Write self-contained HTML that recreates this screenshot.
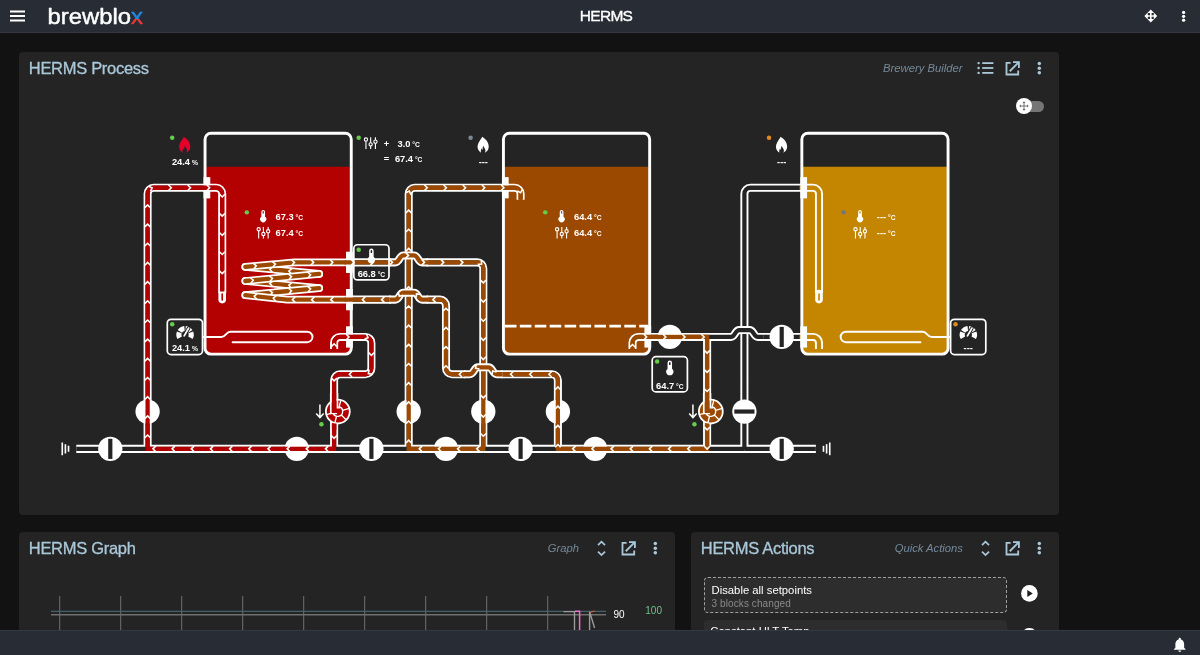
<!DOCTYPE html>
<html lang="en">
<head>
<meta charset="utf-8">
<title>HERMS</title>
<style>
html,body{margin:0;padding:0;}
body{width:1200px;height:655px;overflow:hidden;background:#121212;font-family:"Liberation Sans",sans-serif;color:#fff;position:relative;}
.hdr{will-change:transform;position:absolute;left:0;top:0;width:1200px;height:32px;background:#282c34;border-bottom:1px solid #35383f;}
.ftr{position:absolute;left:0;top:630px;width:1200px;height:24px;background:#282c34;border-top:1px solid #35383f;}
.abs{position:absolute;}
.title{-webkit-text-stroke:0.35px #fff;position:absolute;left:506px;width:200px;text-align:center;top:7.1px;font-size:15.5px;line-height:18px;letter-spacing:-0.7px;color:#fff;}
.w{will-change:transform;position:absolute;background:#242424;border-radius:4px;overflow:hidden;}
.wt{position:absolute;left:9.8px;top:5.8px;font-size:16.5px;line-height:20px;color:#a9c8d9;-webkit-text-stroke:0.3px #a9c8d9;white-space:nowrap;letter-spacing:-0.3px;}
.ws{position:absolute;top:9px;font-size:11.25px;line-height:14px;font-style:italic;color:#74899a;white-space:nowrap;text-align:right;}
svg{display:block;}
.builder{position:absolute;left:0;top:0;}
.bt{font-family:"Liberation Sans",sans-serif;font-size:12.5px;font-weight:bold;fill:#fff;stroke:none;}
.un{font-size:9px;}
.ico{position:absolute;}
</style>
</head>
<body>
<div class="hdr">
  <svg class="abs" style="left:0;top:0" width="160" height="32" viewBox="0 0 160 32">
    <path d="M10,11.5H25M10,16H25M10,20.5H25" stroke="#fff" stroke-width="1.9" fill="none"/>
    <defs><linearGradient id="xg" x1="0" y1="0" x2="0" y2="1" gradientUnits="objectBoundingBox"><stop offset="0.58" stop-color="#1e88e5"/><stop offset="0.58" stop-color="#e53935"/></linearGradient></defs>
    <text x="47.5" y="24.3" font-family="Liberation Sans, sans-serif" font-size="22.5" fill="#fff" stroke="#fff" stroke-width="0.45" stroke-linejoin="round" textLength="95.5" lengthAdjust="spacingAndGlyphs">brewblo<tspan fill="url(#xg)" stroke="url(#xg)">x</tspan></text>
  </svg>
  <div class="title">HERMS</div>
  <svg class="abs" style="left:1140px;top:4px" width="60" height="24" viewBox="0 0 60 24">
    <path d="M10.8,5.6L14.2,9H7.4ZM10.8,18.4L14.2,15H7.4ZM4.4,12L7.8,8.6V15.4ZM17.2,12L13.8,8.6V15.4Z" fill="#fff"/>
    <path d="M10.8,7.5V16.5M6.3,12H15.3" stroke="#fff" stroke-width="1.6"/>
    <circle cx="43.6" cy="8.4" r="1.65" fill="#fff"/><circle cx="43.6" cy="12.3" r="1.65" fill="#fff"/><circle cx="43.6" cy="16.2" r="1.65" fill="#fff"/>
  </svg>
</div>

<!-- widget 1 -->
<div class="w" style="left:19px;top:52px;width:1040px;height:463px;">
  <div class="wt">HERMS Process</div>
  <div class="ws" style="right:96.5px;">Brewery Builder</div>
  <svg class="abs" style="left:950px;top:4px" width="90" height="24" viewBox="0 0 90 24" fill="#a9c8d9">
    <!-- list -->
    <rect x="13.2" y="6.2" width="11.2" height="1.8"/><rect x="13.2" y="11.1" width="11.2" height="1.8"/><rect x="13.2" y="16" width="11.2" height="1.8"/>
    <circle cx="9.6" cy="7.1" r="1.2"/><circle cx="9.6" cy="12" r="1.2"/><circle cx="9.6" cy="16.9" r="1.2"/>
    <!-- open in new -->
    <path d="M36.6,5.9H41.6V7.7H38.4V17.6H48.3V14.4H50.1V19.4H36.6Z"/>
    <path d="M44,5.2H50.8V12H49V8.3L41.4,15.9L40.1,14.6L47.7,7H44Z"/>
    <circle cx="70.3" cy="7.6" r="1.75"/><circle cx="70.3" cy="12.2" r="1.75"/><circle cx="70.3" cy="16.8" r="1.75"/>
  </svg>
  <!-- toggle -->
  <div class="abs" style="left:998px;top:49px;width:26.5px;height:10.5px;border-radius:6px;background:#757575;"></div>
  <div class="abs" style="left:996.7px;top:46.3px;width:16px;height:16px;border-radius:8px;background:#fff;"></div>
  <svg class="abs" style="left:999.7px;top:49.3px" width="10" height="10" viewBox="0 0 10 10"><path d="M5,1.2V8.8M1.2,5H8.8" stroke="#666" stroke-width="0.9"/><path d="M5,0.3L6.5,2H3.5ZM5,9.7L6.5,8H3.5ZM0.3,5L2,3.5V6.5ZM9.7,5L8,3.5V6.5Z" fill="#666"/></svg>
<svg class="builder" width="1040" height="463" viewBox="0 0 1040 463">
<g transform="translate(184.55,79.8) scale(0.746)" fill="none">
<g><path d="M2,47h196v243a8,8 0 0 1 -8,8h-180a8,8 0 0 1 -8,-8z" fill="#b30000" stroke="none"/>
<rect x="2" y="2" width="196" height="296" rx="8" stroke="#fff" stroke-width="3.9" fill="none"/>
<path d="M402,47h196v243a8,8 0 0 1 -8,8h-180a8,8 0 0 1 -8,-8z" fill="#9b4900" stroke="none"/>
<rect x="402" y="2" width="196" height="296" rx="8" stroke="#fff" stroke-width="3.9" fill="none"/>
<path d="M802,47h196v243a8,8 0 0 1 -8,8h-180a8,8 0 0 1 -8,-8z" fill="#c48500" stroke="none"/>
<rect x="802" y="2" width="196" height="296" rx="8" stroke="#fff" stroke-width="3.9" fill="none"/></g>
<g><path d="M831,421v8" stroke="#fff" stroke-width="2.2" />
<path d="M835.2,418.75v12.5" stroke="#fff" stroke-width="2.2" />
<path d="M839.4,416.5v17" stroke="#fff" stroke-width="2.2" />
<path d="M-181,421v8" stroke="#fff" stroke-width="2.2" />
<path d="M-185.2,418.75v12.5" stroke="#fff" stroke-width="2.2" />
<path d="M-189.4,416.5v17" stroke="#fff" stroke-width="2.2" />
<path d="M56,181L155,190.5" stroke="#fff" stroke-width="10.4" stroke-linecap="round" stroke-linejoin="round"/>
<path d="M56,181L155,190.5" stroke="#9b4900" stroke-width="5.8" stroke-linecap="round" stroke-linejoin="round"/>
<path d="M-2.9,-3.7L0.8,0L-2.9,3.7" transform="translate(115.18,186.68) rotate(-174.52)" stroke="#fff" stroke-width="2.1" fill="none"/>
<path d="M-2.9,-3.7L0.8,0L-2.9,3.7" transform="translate(89.6,184.22) rotate(-174.52)" stroke="#fff" stroke-width="2.1" fill="none"/>
<path d="M56,200L155,209.5" stroke="#fff" stroke-width="10.4" stroke-linecap="round" stroke-linejoin="round"/>
<path d="M56,200L155,209.5" stroke="#9b4900" stroke-width="5.8" stroke-linecap="round" stroke-linejoin="round"/>
<path d="M-2.9,-3.7L0.8,0L-2.9,3.7" transform="translate(115.18,205.68) rotate(-174.52)" stroke="#fff" stroke-width="2.1" fill="none"/>
<path d="M-2.9,-3.7L0.8,0L-2.9,3.7" transform="translate(89.6,203.22) rotate(-174.52)" stroke="#fff" stroke-width="2.1" fill="none"/>
<path d="M200,175L122,175L56,181" stroke="#fff" stroke-width="10.4" stroke-linecap="round" stroke-linejoin="round"/>
<path d="M200,175L122,175L56,181" stroke="#9b4900" stroke-width="5.8" stroke-linecap="round" stroke-linejoin="round"/>
<path d="M-2.9,-3.7L0.8,0L-2.9,3.7" transform="translate(69.94,179.73) rotate(-5.19)" stroke="#fff" stroke-width="2.1" fill="none"/>
<path d="M-2.9,-3.7L0.8,0L-2.9,3.7" transform="translate(95.54,177.41) rotate(-5.19)" stroke="#fff" stroke-width="2.1" fill="none"/>
<path d="M-2.9,-3.7L0.8,0L-2.9,3.7" transform="translate(121.13,175.08) rotate(-5.19)" stroke="#fff" stroke-width="2.1" fill="none"/>
<path d="M-2.9,-3.7L0.8,0L-2.9,3.7" transform="translate(146.83,175) rotate(0)" stroke="#fff" stroke-width="2.1" fill="none"/>
<path d="M-2.9,-3.7L0.8,0L-2.9,3.7" transform="translate(172.53,175) rotate(0)" stroke="#fff" stroke-width="2.1" fill="none"/>
<path d="M-2.9,-3.7L0.8,0L-2.9,3.7" transform="translate(198.23,175) rotate(0)" stroke="#fff" stroke-width="2.1" fill="none"/>
<path d="M155,190.5L56,200" stroke="#fff" stroke-width="10.4" stroke-linecap="round" stroke-linejoin="round"/>
<path d="M155,190.5L56,200" stroke="#9b4900" stroke-width="5.8" stroke-linecap="round" stroke-linejoin="round"/>
<path d="M-2.9,-3.7L0.8,0L-2.9,3.7" transform="translate(65.95,199.04) rotate(-5.48)" stroke="#fff" stroke-width="2.1" fill="none"/>
<path d="M-2.9,-3.7L0.8,0L-2.9,3.7" transform="translate(91.54,196.59) rotate(-5.48)" stroke="#fff" stroke-width="2.1" fill="none"/>
<path d="M-2.9,-3.7L0.8,0L-2.9,3.7" transform="translate(117.12,194.14) rotate(-5.48)" stroke="#fff" stroke-width="2.1" fill="none"/>
<path d="M-2.9,-3.7L0.8,0L-2.9,3.7" transform="translate(142.7,191.68) rotate(-5.48)" stroke="#fff" stroke-width="2.1" fill="none"/>
<path d="M155,209.5L56,219" stroke="#fff" stroke-width="10.4" stroke-linecap="round" stroke-linejoin="round"/>
<path d="M155,209.5L56,219" stroke="#9b4900" stroke-width="5.8" stroke-linecap="round" stroke-linejoin="round"/>
<path d="M-2.9,-3.7L0.8,0L-2.9,3.7" transform="translate(65.95,218.04) rotate(-5.48)" stroke="#fff" stroke-width="2.1" fill="none"/>
<path d="M-2.9,-3.7L0.8,0L-2.9,3.7" transform="translate(91.54,215.59) rotate(-5.48)" stroke="#fff" stroke-width="2.1" fill="none"/>
<path d="M-2.9,-3.7L0.8,0L-2.9,3.7" transform="translate(117.12,213.14) rotate(-5.48)" stroke="#fff" stroke-width="2.1" fill="none"/>
<path d="M-2.9,-3.7L0.8,0L-2.9,3.7" transform="translate(142.7,210.68) rotate(-5.48)" stroke="#fff" stroke-width="2.1" fill="none"/>
<path d="M56,219L112,225L200,225" stroke="#fff" stroke-width="10.4" stroke-linecap="round" stroke-linejoin="round"/>
<path d="M56,219L112,225L200,225" stroke="#9b4900" stroke-width="5.8" stroke-linecap="round" stroke-linejoin="round"/>
<path d="M-2.9,-3.7L0.8,0L-2.9,3.7" transform="translate(197,225) rotate(180)" stroke="#fff" stroke-width="2.1" fill="none"/>
<path d="M-2.9,-3.7L0.8,0L-2.9,3.7" transform="translate(171.3,225) rotate(180)" stroke="#fff" stroke-width="2.1" fill="none"/>
<path d="M-2.9,-3.7L0.8,0L-2.9,3.7" transform="translate(145.6,225) rotate(180)" stroke="#fff" stroke-width="2.1" fill="none"/>
<path d="M-2.9,-3.7L0.8,0L-2.9,3.7" transform="translate(119.9,225) rotate(180)" stroke="#fff" stroke-width="2.1" fill="none"/>
<path d="M-2.9,-3.7L0.8,0L-2.9,3.7" transform="translate(94.3,223.1) rotate(-173.88)" stroke="#fff" stroke-width="2.1" fill="none"/>
<path d="M-2.9,-3.7L0.8,0L-2.9,3.7" transform="translate(68.75,220.37) rotate(-173.88)" stroke="#fff" stroke-width="2.1" fill="none"/>
<path d="M0,25H24C30,25 30,18 36,18H139A7,7 0 0 1 139,32H39" transform="translate(0,250)" stroke="#fff" stroke-width="2.6" stroke-linecap="round" fill="none"/>
<path d="M0,25H24C30,25 30,18 36,18H139A7,7 0 0 1 139,32H39" transform="translate(1000,250) scale(-1,1)" stroke="#fff" stroke-width="2.6" stroke-linecap="round" fill="none"/>
<path d="M404,260.5H596" stroke="#fff" stroke-width="3.6" stroke-dasharray="15.5,4.5" fill="none"/></g>
<g><path d="M-151,425L-99,425M-51,425L1,425M-1,425L51,425M49,425L101,425M99,425L151,425M199,425L251,425M299,425L351,425M399,425L451,425M499,425L551,425M549,425L601,425M599,425L651,425M749,425L801,425M-75,425L-101,425M-75,425L-49,425M-75,425L-75,399M175,425L149,425M175,425L201,425M175,425L175,399M275,425L249,425M275,425L301,425M275,425L275,399M375,425L349,425M375,425L401,425M375,425L375,399M475,425L449,425M475,425L501,425M475,425L475,399M675,425L649,425M675,425L701,425M675,425L675,399M725,425L699,425M725,425L751,425M725,425L725,399M799,425L820.8,425M-170.6,425L-149,425M-75,99L-75,151M-75,149L-75,201M-75,199L-75,251M-75,249L-75,301M-75,299L-75,351M-75,349L-75,401M-75,101L-75,83A8,8 0 0 1 -67,75L-49,75M-51,75L1,75M-1,75L17,75A8,8 0 0 1 25,83L25,216M799,75L817,75A8,8 0 0 1 825,83L825,216M749,75L801,75M725,101L725,83A8,8 0 0 1 733,75L751,75M725,99L725,151M725,149L725,201M725,199L725,251M725,249L725,301M725,299L725,351M725,349L725,401M399,75L417,75A8,8 0 0 1 425,83L425,91M799,275L817,275A8,8 0 0 1 825,283L825,291M201,275L183,275A8,8 0 0 0 175,283L175,291M601,275L583,275A8,8 0 0 0 575,283L575,291M199,275L217,275A8,8 0 0 1 225,283L225,301M225,299L225,317A8,8 0 0 1 217,325L199,325M201,325L183,325A8,8 0 0 0 175,333L175,351M175,349L175,401M275,101L275,83A8,8 0 0 1 283,75L301,75M299,75L351,75M349,75L401,75M275,99L275,151M275,149L275,201M275,199L275,251M275,249L275,301M275,299L275,351M275,349L275,401M199,175L251,175M299,175L351,175M349,175L367,175A8,8 0 0 1 375,183L375,201M375,199L375,251M375,249L375,301M375,299L375,351M375,349L375,401M199,225L251,225M299,225L317,225A8,8 0 0 1 325,233L325,251M325,249L325,301M325,299L325,317A8,8 0 0 0 333,325L351,325M399,325L451,325M449,325L467,325A8,8 0 0 1 475,333L475,351M475,349L475,401M599,275L651,275M675,275L649,275M675,275L701,275M675,275L675,301M749,275L801,275M675,299L675,351M675,349L675,401" stroke="#fff" stroke-width="10.8" stroke-linejoin="round"/></g>
<g><path d="M-151,425L-99,425M-51,425L1,425M-1,425L51,425M49,425L101,425M99,425L151,425M199,425L251,425M299,425L351,425M399,425L451,425M499,425L551,425M549,425L601,425M599,425L651,425M749,425L801,425M-75,425L-101,425M-75,425L-49,425M-75,425L-75,399M175,425L149,425M175,425L201,425M175,425L175,399M275,425L249,425M275,425L301,425M275,425L275,399M375,425L349,425M375,425L401,425M375,425L375,399M475,425L449,425M475,425L501,425M475,425L475,399M675,425L649,425M675,425L701,425M675,425L675,399M725,425L699,425M725,425L751,425M725,425L725,399M799,425L820.8,425M-170.6,425L-149,425M-75,99L-75,151M-75,149L-75,201M-75,199L-75,251M-75,249L-75,301M-75,299L-75,351M-75,349L-75,401M-75,101L-75,83A8,8 0 0 1 -67,75L-49,75M-51,75L1,75M749,75L801,75M725,101L725,83A8,8 0 0 1 733,75L751,75M725,99L725,151M725,149L725,201M725,199L725,251M725,249L725,301M725,299L725,351M725,349L725,401M199,275L217,275A8,8 0 0 1 225,283L225,301M225,299L225,317A8,8 0 0 1 217,325L199,325M201,325L183,325A8,8 0 0 0 175,333L175,351M175,349L175,401M275,101L275,83A8,8 0 0 1 283,75L301,75M299,75L351,75M349,75L401,75M275,99L275,151M275,149L275,201M275,199L275,251M275,249L275,301M275,299L275,351M275,349L275,401M199,175L251,175M299,175L351,175M349,175L367,175A8,8 0 0 1 375,183L375,201M375,199L375,251M375,249L375,301M375,299L375,351M375,349L375,401M199,225L251,225M299,225L317,225A8,8 0 0 1 325,233L325,251M325,249L325,301M325,299L325,317A8,8 0 0 0 333,325L351,325M399,325L451,325M449,325L467,325A8,8 0 0 1 475,333L475,351M475,349L475,401M599,275L651,275M675,275L649,275M675,275L701,275M675,275L675,301M749,275L801,275M675,299L675,351M675,349L675,401" stroke="#242424" stroke-width="5.7" stroke-linejoin="round"/>
<path d="M-1,75L17,75A8,8 0 0 1 25,83L25,216M201,275L183,275A8,8 0 0 0 175,283L175,291" stroke="#b30000" stroke-width="5.7" stroke-linejoin="round"/>
<path d="M799,75L817,75A8,8 0 0 1 825,83L825,216M799,275L817,275A8,8 0 0 1 825,283L825,291" stroke="#c48500" stroke-width="5.7" stroke-linejoin="round"/>
<path d="M399,75L417,75A8,8 0 0 1 425,83L425,91M601,275L583,275A8,8 0 0 0 575,283L575,291" stroke="#9b4900" stroke-width="5.7" stroke-linejoin="round"/></g>
<g><rect x="19.9" y="211.6" width="10.2" height="18.4" rx="5.1" fill="#fff"/><path d="M25,217.5V225.5" stroke="#b30000" stroke-width="2.2" stroke-linecap="round"/>
<rect x="0" y="60.75" width="9" height="28.5" fill="#fff"/>
<rect x="819.9" y="211.6" width="10.2" height="18.4" rx="5.1" fill="#fff"/><path d="M825,217.5V225.5" stroke="#c48500" stroke-width="2.2" stroke-linecap="round"/>
<rect x="800" y="60.75" width="9" height="28.5" fill="#fff"/>
<rect x="400" y="60.75" width="9" height="28.5" fill="#fff"/>
<rect x="800" y="260.75" width="9" height="28.5" fill="#fff"/>
<rect x="191" y="260.75" width="9" height="28.5" fill="#fff"/>
<rect x="591" y="260.75" width="9" height="28.5" fill="#fff"/>
<rect x="191" y="160.75" width="9" height="28.5" fill="#fff"/>
<rect x="191" y="210.75" width="9" height="28.5" fill="#fff"/></g>
<g><path d="M175,291L175,283A8,8 0 0 1 183,275L217,275A8,8 0 0 1 225,283L225,317A8,8 0 0 1 217,325L183,325A8,8 0 0 0 175,333L175,425L-75,425L-75,83A8,8 0 0 1 -67,75L17,75A8,8 0 0 1 25,83L25,214" stroke="#b30000" stroke-width="5.7" stroke-linecap="butt" stroke-linejoin="miter"/>
<path d="M575,291L575,283A8,8 0 0 1 583,275L675,275L675,425L475,425L475,333A8,8 0 0 0 467,325L393,325C387.5,325 387.5,315.7 382,315.7L368,315.7C362.5,315.7 362.5,325 357,325L357,325L333,325A8,8 0 0 1 325,317L325,233A8,8 0 0 0 317,225L293,225C287.5,225 287.5,215.7 282,215.7L268,215.7C262.5,215.7 262.5,225 257,225L257,225L189,225" stroke="#9b4900" stroke-width="5.7" stroke-linecap="butt" stroke-linejoin="miter"/>
<path d="M189,175L257,175C262.5,175 262.5,165.7 268,165.7L282,165.7C287.5,165.7 287.5,175 293,175L293,175L367,175A8,8 0 0 1 375,183L375,425L275,425L275,83A8,8 0 0 1 283,75L417,75A8,8 0 0 1 425,83L425,91" stroke="#9b4900" stroke-width="5.7" stroke-linecap="butt" stroke-linejoin="miter"/></g>
<g><path d="M249,175L257,175C262.5,175 262.5,165.7 268,165.7L282,165.7C287.5,165.7 287.5,175 293,175L293,175L301,175" stroke="#fff" stroke-width="10.8" />
<path d="M249,175L257,175C262.5,175 262.5,165.7 268,165.7L282,165.7C287.5,165.7 287.5,175 293,175L293,175L301,175" stroke="#9b4900" stroke-width="5.7" />
<path d="M249,225L257,225C262.5,225 262.5,215.7 268,215.7L282,215.7C287.5,215.7 287.5,225 293,225L293,225L301,225" stroke="#fff" stroke-width="10.8" />
<path d="M249,225L257,225C262.5,225 262.5,215.7 268,215.7L282,215.7C287.5,215.7 287.5,225 293,225L293,225L301,225" stroke="#9b4900" stroke-width="5.7" />
<path d="M349,325L357,325C362.5,325 362.5,315.7 368,315.7L382,315.7C387.5,315.7 387.5,325 393,325L393,325L401,325" stroke="#fff" stroke-width="10.8" />
<path d="M349,325L357,325C362.5,325 362.5,315.7 368,315.7L382,315.7C387.5,315.7 387.5,325 393,325L393,325L401,325" stroke="#9b4900" stroke-width="5.7" />
<path d="M699,275L707,275C712.5,275 712.5,265.7 718,265.7L732,265.7C737.5,265.7 737.5,275 743,275L743,275L751,275" stroke="#fff" stroke-width="10.8" />
<path d="M699,275L707,275C712.5,275 712.5,265.7 718,265.7L732,265.7C737.5,265.7 737.5,275 743,275L743,275L751,275" stroke="#242424" stroke-width="5.7" /></g>
<g><circle cx="-125" cy="425" r="16.3" fill="#fff"/>
<rect x="-127.8" y="411.5" width="5.6" height="27" fill="#242424"/>
<circle cx="125" cy="425" r="16.3" fill="#fff"/>
<path d="M107,425H143" stroke="#b30000" stroke-width="5.7" />
<circle cx="225" cy="425" r="16.3" fill="#fff"/>
<rect x="222.2" y="411.5" width="5.6" height="27" fill="#242424"/>
<circle cx="325" cy="425" r="16.3" fill="#fff"/>
<path d="M307,425H343" stroke="#9b4900" stroke-width="5.7" />
<circle cx="425" cy="425" r="16.3" fill="#fff"/>
<rect x="422.2" y="411.5" width="5.6" height="27" fill="#242424"/>
<circle cx="525" cy="425" r="16.3" fill="#fff"/>
<path d="M507,425H543" stroke="#9b4900" stroke-width="5.7" />
<circle cx="775" cy="425" r="16.3" fill="#fff"/>
<rect x="772.2" y="411.5" width="5.6" height="27" fill="#242424"/>
<circle cx="-75" cy="375" r="16.3" fill="#fff"/>
<path d="M-75,357V393" stroke="#b30000" stroke-width="5.7" />
<circle cx="275" cy="375" r="16.3" fill="#fff"/>
<path d="M275,357V393" stroke="#9b4900" stroke-width="5.7" />
<circle cx="375" cy="375" r="16.3" fill="#fff"/>
<path d="M375,357V393" stroke="#9b4900" stroke-width="5.7" />
<circle cx="475" cy="375" r="16.3" fill="#fff"/>
<path d="M475,357V393" stroke="#9b4900" stroke-width="5.7" />
<circle cx="725" cy="375" r="16.3" fill="#fff"/>
<rect x="711.5" y="372.2" width="27" height="5.6" fill="#242424"/>
<circle cx="625" cy="275" r="16.3" fill="#fff"/>
<path d="M607,275H643" stroke="#9b4900" stroke-width="5.7" />
<circle cx="775" cy="275" r="16.3" fill="#fff"/>
<rect x="772.2" y="261.5" width="5.6" height="27" fill="#242424"/>
<g transform="translate(150,350)"><circle cx="30" cy="25" r="16" fill="#b30000" stroke="#fff" stroke-width="2.4"/><path d="M31.68,18.72L34.14,9.55" stroke="#fff" stroke-width="1.8"/><path d="M36.28,23.32L45.45,20.86" stroke="#fff" stroke-width="1.8"/><path d="M34.6,29.6L41.31,36.31" stroke="#fff" stroke-width="1.8"/><path d="M28.32,31.28L25.86,40.45" stroke="#fff" stroke-width="1.8"/><path d="M23.72,26.68L14.55,29.14" stroke="#fff" stroke-width="1.8"/><path d="M31.1,18.6A6.5,6.5 0 1 1 23.6,26.1" stroke="#fff" stroke-width="1.8" fill="none"/><path d="M20.6,0V27.5H29" stroke="#fff" stroke-width="2.4" fill="none"/><path d="M29.4,0V20.5H33" stroke="#fff" stroke-width="2.4" fill="none"/><path d="M25,0V24H33" stroke="#b30000" stroke-width="6" fill="none"/><path d="M25,41V50" stroke="#b30000" stroke-width="6" fill="none"/><path d="M6,15.5V33M1,27.5L6,33L11,27.5" stroke="#fff" stroke-width="2" fill="none"/><circle cx="8" cy="42" r="3" fill="#66cc4d"/></g>
<g transform="translate(650,350)"><circle cx="30" cy="25" r="16" fill="#9b4900" stroke="#fff" stroke-width="2.4"/><path d="M31.68,18.72L34.14,9.55" stroke="#fff" stroke-width="1.8"/><path d="M36.28,23.32L45.45,20.86" stroke="#fff" stroke-width="1.8"/><path d="M34.6,29.6L41.31,36.31" stroke="#fff" stroke-width="1.8"/><path d="M28.32,31.28L25.86,40.45" stroke="#fff" stroke-width="1.8"/><path d="M23.72,26.68L14.55,29.14" stroke="#fff" stroke-width="1.8"/><path d="M31.1,18.6A6.5,6.5 0 1 1 23.6,26.1" stroke="#fff" stroke-width="1.8" fill="none"/><path d="M20.6,0V27.5H29" stroke="#fff" stroke-width="2.4" fill="none"/><path d="M29.4,0V20.5H33" stroke="#fff" stroke-width="2.4" fill="none"/><path d="M25,0V24H33" stroke="#9b4900" stroke-width="6" fill="none"/><path d="M25,41V50" stroke="#9b4900" stroke-width="6" fill="none"/><path d="M6,15.5V33M1,27.5L6,33L11,27.5" stroke="#fff" stroke-width="2" fill="none"/><circle cx="8" cy="42" r="3" fill="#66cc4d"/></g></g>
<g stroke="#fff" stroke-width="2.1" fill="none" stroke-linejoin="miter"><path d="M-2.9,-3.7L0.8,0L-2.9,3.7" transform="translate(175,285) rotate(-90)"/>
<path d="M-2.9,-3.7L0.8,0L-2.9,3.7" transform="translate(194.14,275) rotate(0)"/>
<path d="M-2.9,-3.7L0.8,0L-2.9,3.7" transform="translate(219.78,275.5) rotate(19.8)"/>
<path d="M-2.9,-3.7L0.8,0L-2.9,3.7" transform="translate(225,298.97) rotate(90)"/>
<path d="M-2.9,-3.7L0.8,0L-2.9,3.7" transform="translate(221.59,323.55) rotate(145.8)"/>
<path d="M-2.9,-3.7L0.8,0L-2.9,3.7" transform="translate(196.19,325) rotate(180)"/>
<path d="M-2.9,-3.7L0.8,0L-2.9,3.7" transform="translate(175,332.94) rotate(91.8)"/>
<path d="M-2.9,-3.7L0.8,0L-2.9,3.7" transform="translate(175,410.04) rotate(90)"/>
<path d="M-2.9,-3.7L0.8,0L-2.9,3.7" transform="translate(164.26,425) rotate(180)"/>
<path d="M-2.9,-3.7L0.8,0L-2.9,3.7" transform="translate(138.56,425) rotate(180)"/>
<path d="M-2.9,-3.7L0.8,0L-2.9,3.7" transform="translate(112.86,425) rotate(180)"/>
<path d="M-2.9,-3.7L0.8,0L-2.9,3.7" transform="translate(87.16,425) rotate(180)"/>
<path d="M-2.9,-3.7L0.8,0L-2.9,3.7" transform="translate(61.46,425) rotate(180)"/>
<path d="M-2.9,-3.7L0.8,0L-2.9,3.7" transform="translate(35.76,425) rotate(180)"/>
<path d="M-2.9,-3.7L0.8,0L-2.9,3.7" transform="translate(10.06,425) rotate(180)"/>
<path d="M-2.9,-3.7L0.8,0L-2.9,3.7" transform="translate(-15.64,425) rotate(180)"/>
<path d="M-2.9,-3.7L0.8,0L-2.9,3.7" transform="translate(-41.34,425) rotate(180)"/>
<path d="M-2.9,-3.7L0.8,0L-2.9,3.7" transform="translate(-67.04,425) rotate(180)"/>
<path d="M-2.9,-3.7L0.8,0L-2.9,3.7" transform="translate(-75,407.26) rotate(-90)"/>
<path d="M-2.9,-3.7L0.8,0L-2.9,3.7" transform="translate(-75,381.56) rotate(-90)"/>
<path d="M-2.9,-3.7L0.8,0L-2.9,3.7" transform="translate(-75,355.86) rotate(-90)"/>
<path d="M-2.9,-3.7L0.8,0L-2.9,3.7" transform="translate(-75,330.16) rotate(-90)"/>
<path d="M-2.9,-3.7L0.8,0L-2.9,3.7" transform="translate(-75,304.46) rotate(-90)"/>
<path d="M-2.9,-3.7L0.8,0L-2.9,3.7" transform="translate(-75,278.76) rotate(-90)"/>
<path d="M-2.9,-3.7L0.8,0L-2.9,3.7" transform="translate(-75,253.06) rotate(-90)"/>
<path d="M-2.9,-3.7L0.8,0L-2.9,3.7" transform="translate(-75,227.36) rotate(-90)"/>
<path d="M-2.9,-3.7L0.8,0L-2.9,3.7" transform="translate(-75,201.66) rotate(-90)"/>
<path d="M-2.9,-3.7L0.8,0L-2.9,3.7" transform="translate(-75,175.96) rotate(-90)"/>
<path d="M-2.9,-3.7L0.8,0L-2.9,3.7" transform="translate(-75,150.26) rotate(-90)"/>
<path d="M-2.9,-3.7L0.8,0L-2.9,3.7" transform="translate(-75,124.56) rotate(-90)"/>
<path d="M-2.9,-3.7L0.8,0L-2.9,3.7" transform="translate(-75,98.86) rotate(-90)"/>
<path d="M-2.9,-3.7L0.8,0L-2.9,3.7" transform="translate(-69.67,75.46) rotate(-19.8)"/>
<path d="M-2.9,-3.7L0.8,0L-2.9,3.7" transform="translate(-44.02,75) rotate(0)"/>
<path d="M-2.9,-3.7L0.8,0L-2.9,3.7" transform="translate(-18.32,75) rotate(0)"/>
<path d="M-2.9,-3.7L0.8,0L-2.9,3.7" transform="translate(7.38,75) rotate(0)"/>
<path d="M-2.9,-3.7L0.8,0L-2.9,3.7" transform="translate(25,86.51) rotate(90)"/>
<path d="M-2.9,-3.7L0.8,0L-2.9,3.7" transform="translate(25,112.21) rotate(90)"/>
<path d="M-2.9,-3.7L0.8,0L-2.9,3.7" transform="translate(25,137.91) rotate(90)"/>
<path d="M-2.9,-3.7L0.8,0L-2.9,3.7" transform="translate(25,163.61) rotate(90)"/>
<path d="M-2.9,-3.7L0.8,0L-2.9,3.7" transform="translate(25,189.31) rotate(90)"/>
<path d="M-2.9,-3.7L0.8,0L-2.9,3.7" transform="translate(575,286) rotate(-90)"/>
<path d="M-2.9,-3.7L0.8,0L-2.9,3.7" transform="translate(593.14,275) rotate(0)"/>
<path d="M-2.9,-3.7L0.8,0L-2.9,3.7" transform="translate(618.84,275) rotate(0)"/>
<path d="M-2.9,-3.7L0.8,0L-2.9,3.7" transform="translate(644.54,275) rotate(0)"/>
<path d="M-2.9,-3.7L0.8,0L-2.9,3.7" transform="translate(670.24,275) rotate(0)"/>
<path d="M-2.9,-3.7L0.8,0L-2.9,3.7" transform="translate(675,295.94) rotate(90)"/>
<path d="M-2.9,-3.7L0.8,0L-2.9,3.7" transform="translate(675,321.64) rotate(90)"/>
<path d="M-2.9,-3.7L0.8,0L-2.9,3.7" transform="translate(675,347.34) rotate(90)"/>
<path d="M-2.9,-3.7L0.8,0L-2.9,3.7" transform="translate(675,398.74) rotate(90)"/>
<path d="M-2.9,-3.7L0.8,0L-2.9,3.7" transform="translate(675,424.44) rotate(90)"/>
<path d="M-2.9,-3.7L0.8,0L-2.9,3.7" transform="translate(649.86,425) rotate(180)"/>
<path d="M-2.9,-3.7L0.8,0L-2.9,3.7" transform="translate(624.16,425) rotate(180)"/>
<path d="M-2.9,-3.7L0.8,0L-2.9,3.7" transform="translate(598.46,425) rotate(180)"/>
<path d="M-2.9,-3.7L0.8,0L-2.9,3.7" transform="translate(572.76,425) rotate(180)"/>
<path d="M-2.9,-3.7L0.8,0L-2.9,3.7" transform="translate(547.06,425) rotate(180)"/>
<path d="M-2.9,-3.7L0.8,0L-2.9,3.7" transform="translate(521.36,425) rotate(180)"/>
<path d="M-2.9,-3.7L0.8,0L-2.9,3.7" transform="translate(495.66,425) rotate(180)"/>
<path d="M-2.9,-3.7L0.8,0L-2.9,3.7" transform="translate(475,419.96) rotate(-90)"/>
<path d="M-2.9,-3.7L0.8,0L-2.9,3.7" transform="translate(475,394.26) rotate(-90)"/>
<path d="M-2.9,-3.7L0.8,0L-2.9,3.7" transform="translate(475,368.56) rotate(-90)"/>
<path d="M-2.9,-3.7L0.8,0L-2.9,3.7" transform="translate(475,342.86) rotate(-90)"/>
<path d="M-2.9,-3.7L0.8,0L-2.9,3.7" transform="translate(463.73,325) rotate(180)"/>
<path d="M-2.9,-3.7L0.8,0L-2.9,3.7" transform="translate(438.03,325) rotate(180)"/>
<path d="M-2.9,-3.7L0.8,0L-2.9,3.7" transform="translate(412.33,325) rotate(180)"/>
<path d="M-2.9,-3.7L0.8,0L-2.9,3.7" transform="translate(388.13,321.39) rotate(-121.42)"/>
<path d="M-2.9,-3.7L0.8,0L-2.9,3.7" transform="translate(365.32,316.64) rotate(143.5)"/>
<path d="M-2.9,-3.7L0.8,0L-2.9,3.7" transform="translate(343.57,325) rotate(180)"/>
<path d="M-2.9,-3.7L0.8,0L-2.9,3.7" transform="translate(325,314.43) rotate(-90)"/>
<path d="M-2.9,-3.7L0.8,0L-2.9,3.7" transform="translate(325,288.73) rotate(-90)"/>
<path d="M-2.9,-3.7L0.8,0L-2.9,3.7" transform="translate(325,263.03) rotate(-90)"/>
<path d="M-2.9,-3.7L0.8,0L-2.9,3.7" transform="translate(325,237.33) rotate(-90)"/>
<path d="M-2.9,-3.7L0.8,0L-2.9,3.7" transform="translate(308.2,225) rotate(180)"/>
<path d="M-2.9,-3.7L0.8,0L-2.9,3.7" transform="translate(285.91,217.91) rotate(-128.16)"/>
<path d="M-2.9,-3.7L0.8,0L-2.9,3.7" transform="translate(262.78,219.87) rotate(120.72)"/>
<path d="M-2.9,-3.7L0.8,0L-2.9,3.7" transform="translate(239.44,225) rotate(180)"/>
<path d="M-2.9,-3.7L0.8,0L-2.9,3.7" transform="translate(213.74,225) rotate(180)"/>
<path d="M-2.9,-3.7L0.8,0L-2.9,3.7" transform="translate(201,175) rotate(0)"/>
<path d="M-2.9,-3.7L0.8,0L-2.9,3.7" transform="translate(226.7,175) rotate(0)"/>
<path d="M-2.9,-3.7L0.8,0L-2.9,3.7" transform="translate(252.4,175) rotate(0)"/>
<path d="M-2.9,-3.7L0.8,0L-2.9,3.7" transform="translate(273.93,165.7) rotate(0)"/>
<path d="M-2.9,-3.7L0.8,0L-2.9,3.7" transform="translate(295.46,175) rotate(0)"/>
<path d="M-2.9,-3.7L0.8,0L-2.9,3.7" transform="translate(321.16,175) rotate(0)"/>
<path d="M-2.9,-3.7L0.8,0L-2.9,3.7" transform="translate(346.86,175) rotate(0)"/>
<path d="M-2.9,-3.7L0.8,0L-2.9,3.7" transform="translate(372.12,176.86) rotate(41.4)"/>
<path d="M-2.9,-3.7L0.8,0L-2.9,3.7" transform="translate(375,201.69) rotate(90)"/>
<path d="M-2.9,-3.7L0.8,0L-2.9,3.7" transform="translate(375,227.39) rotate(90)"/>
<path d="M-2.9,-3.7L0.8,0L-2.9,3.7" transform="translate(375,253.09) rotate(90)"/>
<path d="M-2.9,-3.7L0.8,0L-2.9,3.7" transform="translate(375,278.79) rotate(90)"/>
<path d="M-2.9,-3.7L0.8,0L-2.9,3.7" transform="translate(375,304.49) rotate(90)"/>
<path d="M-2.9,-3.7L0.8,0L-2.9,3.7" transform="translate(375,355.89) rotate(90)"/>
<path d="M-2.9,-3.7L0.8,0L-2.9,3.7" transform="translate(375,381.59) rotate(90)"/>
<path d="M-2.9,-3.7L0.8,0L-2.9,3.7" transform="translate(375,407.29) rotate(90)"/>
<path d="M-2.9,-3.7L0.8,0L-2.9,3.7" transform="translate(367.01,425) rotate(180)"/>
<path d="M-2.9,-3.7L0.8,0L-2.9,3.7" transform="translate(341.31,425) rotate(180)"/>
<path d="M-2.9,-3.7L0.8,0L-2.9,3.7" transform="translate(315.61,425) rotate(180)"/>
<path d="M-2.9,-3.7L0.8,0L-2.9,3.7" transform="translate(289.91,425) rotate(180)"/>
<path d="M-2.9,-3.7L0.8,0L-2.9,3.7" transform="translate(275,414.21) rotate(-90)"/>
<path d="M-2.9,-3.7L0.8,0L-2.9,3.7" transform="translate(275,388.51) rotate(-90)"/>
<path d="M-2.9,-3.7L0.8,0L-2.9,3.7" transform="translate(275,362.81) rotate(-90)"/>
<path d="M-2.9,-3.7L0.8,0L-2.9,3.7" transform="translate(275,337.11) rotate(-90)"/>
<path d="M-2.9,-3.7L0.8,0L-2.9,3.7" transform="translate(275,311.41) rotate(-90)"/>
<path d="M-2.9,-3.7L0.8,0L-2.9,3.7" transform="translate(275,285.71) rotate(-90)"/>
<path d="M-2.9,-3.7L0.8,0L-2.9,3.7" transform="translate(275,260.01) rotate(-90)"/>
<path d="M-2.9,-3.7L0.8,0L-2.9,3.7" transform="translate(275,234.31) rotate(-90)"/>
<path d="M-2.9,-3.7L0.8,0L-2.9,3.7" transform="translate(275,208.61) rotate(-90)"/>
<path d="M-2.9,-3.7L0.8,0L-2.9,3.7" transform="translate(275,157.21) rotate(-90)"/>
<path d="M-2.9,-3.7L0.8,0L-2.9,3.7" transform="translate(275,131.51) rotate(-90)"/>
<path d="M-2.9,-3.7L0.8,0L-2.9,3.7" transform="translate(275,105.81) rotate(-90)"/>
<path d="M-2.9,-3.7L0.8,0L-2.9,3.7" transform="translate(275.52,80.17) rotate(-70.2)"/>
<path d="M-2.9,-3.7L0.8,0L-2.9,3.7" transform="translate(299.03,75) rotate(0)"/>
<path d="M-2.9,-3.7L0.8,0L-2.9,3.7" transform="translate(324.73,75) rotate(0)"/>
<path d="M-2.9,-3.7L0.8,0L-2.9,3.7" transform="translate(350.43,75) rotate(0)"/>
<path d="M-2.9,-3.7L0.8,0L-2.9,3.7" transform="translate(376.13,75) rotate(0)"/>
<path d="M-2.9,-3.7L0.8,0L-2.9,3.7" transform="translate(401.83,75) rotate(0)"/>
<path d="M-2.9,-3.7L0.8,0L-2.9,3.7" transform="translate(424.74,80.99) rotate(73.8)"/></g>
<g fill="#fff"><circle cx="-42" cy="8" r="3" fill="#66cc4d"/><path d="M11,2.5C9.8,5 8,6.6 6.8,9C5.6,11.2 5,13.2 5.3,15.3C5.7,18 7.3,20.2 9.6,21.2C8.9,19.6 9.2,17.8 10.3,16.4C10.6,17.3 11,17.8 11.5,18C11.2,16 11.6,14.4 12.4,13C12.9,15 14.6,16.2 14.9,18.2C15.1,19.3 14.8,20.3 14.2,21.2C16.7,20.2 18.5,18 18.9,15.2C19.3,12 17.9,9.3 16.3,7C15.3,5.6 13.2,4.2 11,2.5Z" transform="translate(-38.4,3.6) scale(1.09,1.15)" fill="#e4002b" stroke="none"/><text x="-25" y="44.2" text-anchor="middle" class="bt">24.4<tspan class="un" dx="2.5">%</tspan></text>
<circle cx="358" cy="8" r="3" fill="#7d8a94"/><path d="M11,2.5C9.8,5 8,6.6 6.8,9C5.6,11.2 5,13.2 5.3,15.3C5.7,18 7.3,20.2 9.6,21.2C8.9,19.6 9.2,17.8 10.3,16.4C10.6,17.3 11,17.8 11.5,18C11.2,16 11.6,14.4 12.4,13C12.9,15 14.6,16.2 14.9,18.2C15.1,19.3 14.8,20.3 14.2,21.2C16.7,20.2 18.5,18 18.9,15.2C19.3,12 17.9,9.3 16.3,7C15.3,5.6 13.2,4.2 11,2.5Z" transform="translate(361.6,3.6) scale(1.09,1.15)" fill="#fff" stroke="none"/><text x="375" y="44" text-anchor="middle" class="bt">---</text>
<circle cx="758" cy="8" r="3" fill="#e08a1e"/><path d="M11,2.5C9.8,5 8,6.6 6.8,9C5.6,11.2 5,13.2 5.3,15.3C5.7,18 7.3,20.2 9.6,21.2C8.9,19.6 9.2,17.8 10.3,16.4C10.6,17.3 11,17.8 11.5,18C11.2,16 11.6,14.4 12.4,13C12.9,15 14.6,16.2 14.9,18.2C15.1,19.3 14.8,20.3 14.2,21.2C16.7,20.2 18.5,18 18.9,15.2C19.3,12 17.9,9.3 16.3,7C15.3,5.6 13.2,4.2 11,2.5Z" transform="translate(761.6,3.6) scale(1.09,1.15)" fill="#fff" stroke="none"/><text x="775" y="44" text-anchor="middle" class="bt">---</text>
<circle cx="58" cy="108" r="3" fill="#66cc4d"/><path d="M15 13V5A3 3 0 0 0 9 5V13A5 5 0 1 0 15 13M12 4A1 1 0 0 1 13 5V8H11V5A1 1 0 0 1 12 4Z" transform="translate(70,103) scale(0.83)" fill="#fff" stroke="none"/><g transform="translate(71.4,127.6)" stroke="#fff" stroke-width="1.5" fill="none"><path d="M2.5,5.2V15.5M8.8,0V7.2M8.8,11.6V15.5M15.2,0V3.6M15.2,8V15.5"/><circle cx="2.5" cy="3" r="2.2"/><circle cx="8.8" cy="9.4" r="2.2"/><circle cx="15.2" cy="5.8" r="2.2"/></g><text x="115" y="117.8" text-anchor="middle" class="bt">67.3<tspan class="un" dx="2.5">°C</tspan></text><text x="115" y="139.8" text-anchor="middle" class="bt">67.4<tspan class="un" dx="2.5">°C</tspan></text>
<circle cx="458" cy="108" r="3" fill="#66cc4d"/><path d="M15 13V5A3 3 0 0 0 9 5V13A5 5 0 1 0 15 13M12 4A1 1 0 0 1 13 5V8H11V5A1 1 0 0 1 12 4Z" transform="translate(470,103) scale(0.83)" fill="#fff" stroke="none"/><g transform="translate(471.4,127.6)" stroke="#fff" stroke-width="1.5" fill="none"><path d="M2.5,5.2V15.5M8.8,0V7.2M8.8,11.6V15.5M15.2,0V3.6M15.2,8V15.5"/><circle cx="2.5" cy="3" r="2.2"/><circle cx="8.8" cy="9.4" r="2.2"/><circle cx="15.2" cy="5.8" r="2.2"/></g><text x="515" y="117.8" text-anchor="middle" class="bt">64.4<tspan class="un" dx="2.5">°C</tspan></text><text x="515" y="139.8" text-anchor="middle" class="bt">64.4<tspan class="un" dx="2.5">°C</tspan></text>
<circle cx="858" cy="108" r="3" fill="#6c7780"/><path d="M15 13V5A3 3 0 0 0 9 5V13A5 5 0 1 0 15 13M12 4A1 1 0 0 1 13 5V8H11V5A1 1 0 0 1 12 4Z" transform="translate(870,103) scale(0.83)" fill="#fff" stroke="none"/><g transform="translate(871.4,127.6)" stroke="#fff" stroke-width="1.5" fill="none"><path d="M2.5,5.2V15.5M8.8,0V7.2M8.8,11.6V15.5M15.2,0V3.6M15.2,8V15.5"/><circle cx="2.5" cy="3" r="2.2"/><circle cx="8.8" cy="9.4" r="2.2"/><circle cx="15.2" cy="5.8" r="2.2"/></g><text x="915" y="117.8" text-anchor="middle" class="bt">---<tspan class="un" dx="2.5">°C</tspan></text><text x="915" y="139.8" text-anchor="middle" class="bt">---<tspan class="un" dx="2.5">°C</tspan></text>
<circle cx="208" cy="8" r="3" fill="#66cc4d"/><g transform="translate(215.2,7.4)" stroke="#fff" stroke-width="1.5" fill="none"><path d="M2.5,5.2V15.5M8.8,0V7.2M8.8,11.6V15.5M15.2,0V3.6M15.2,8V15.5"/><circle cx="2.5" cy="3" r="2.2"/><circle cx="8.8" cy="9.4" r="2.2"/><circle cx="15.2" cy="5.8" r="2.2"/></g><text x="245.3" y="20.6" text-anchor="middle" class="bt">+</text><text x="245.3" y="40.3" text-anchor="middle" class="bt">=</text><text x="275" y="20.4" text-anchor="middle" class="bt">3.0<tspan class="un" dx="2.5">°C</tspan></text><text x="275" y="40.3" text-anchor="middle" class="bt">67.4<tspan class="un" dx="2.5">°C</tspan></text>
<rect x="201.4" y="151.4" width="47.2" height="47.2" rx="5" fill="none" stroke="#fff" stroke-width="2.3"/><circle cx="208" cy="158" r="3" fill="#66cc4d"/><path d="M15 13V5A3 3 0 0 0 9 5V13A5 5 0 1 0 15 13M12 4A1 1 0 0 1 13 5V8H11V5A1 1 0 0 1 12 4Z" transform="translate(213,154.5) scale(1)" fill="#fff" stroke="none"/><text x="225" y="194.2" text-anchor="middle" class="bt">66.8<tspan class="un" dx="2.5">°C</tspan></text>
<rect x="601.4" y="301.4" width="47.2" height="47.2" rx="5" fill="#242424" stroke="#fff" stroke-width="2.3"/><circle cx="608" cy="308" r="3" fill="#66cc4d"/><path d="M15 13V5A3 3 0 0 0 9 5V13A5 5 0 1 0 15 13M12 4A1 1 0 0 1 13 5V8H11V5A1 1 0 0 1 12 4Z" transform="translate(613,304.5) scale(1)" fill="#fff" stroke="none"/><text x="625" y="344.2" text-anchor="middle" class="bt">64.7<tspan class="un" dx="2.5">°C</tspan></text>
<rect x="-48.6" y="251.4" width="47.2" height="47.2" rx="5" fill="#242424" stroke="#fff" stroke-width="2.3"/><circle cx="-42" cy="258" r="3" fill="#66cc4d"/><path d="M-34.93,277.85A11.7,11.7 0 0 1 -35.65,267.62L-29.34,270.16A4.9,4.9 0 0 0 -29.04,274.45Z" fill="#fff" stroke="none"/><path d="M-34.65,265.68A11.7,11.7 0 0 1 -25.88,260.35L-25.25,267.12A4.9,4.9 0 0 0 -28.92,269.35Z" fill="#fff" stroke="none"/><path d="M-23.72,260.35A11.7,11.7 0 0 1 -14.95,265.68L-20.68,269.35A4.9,4.9 0 0 0 -24.35,267.12Z" fill="#fff" stroke="none"/><path d="M-13.95,267.62A11.7,11.7 0 0 1 -14.67,277.85L-20.56,274.45A4.9,4.9 0 0 0 -20.26,270.16Z" fill="#fff" stroke="none"/><path d="M-26,273.5L-20,263.2" stroke="#242424" stroke-width="5" stroke-linecap="round"/><path d="M-26,273.5L-20,263.2" stroke="#fff" stroke-width="2.4" stroke-linecap="round"/><text x="-25" y="293.4" text-anchor="middle" class="bt">24.1<tspan class="un" dx="2.5">%</tspan></text>
<rect x="1001.4" y="251.4" width="47.2" height="47.2" rx="5" fill="#242424" stroke="#fff" stroke-width="2.3"/><circle cx="1008" cy="258" r="3" fill="#e08a1e"/><path d="M1015.07,277.85A11.7,11.7 0 0 1 1014.35,267.62L1020.66,270.16A4.9,4.9 0 0 0 1020.96,274.45Z" fill="#fff" stroke="none"/><path d="M1015.35,265.68A11.7,11.7 0 0 1 1024.12,260.35L1024.75,267.12A4.9,4.9 0 0 0 1021.08,269.35Z" fill="#fff" stroke="none"/><path d="M1026.28,260.35A11.7,11.7 0 0 1 1035.05,265.68L1029.32,269.35A4.9,4.9 0 0 0 1025.65,267.12Z" fill="#fff" stroke="none"/><path d="M1036.05,267.62A11.7,11.7 0 0 1 1035.33,277.85L1029.44,274.45A4.9,4.9 0 0 0 1029.74,270.16Z" fill="#fff" stroke="none"/><path d="M1024,273.5L1030,263.2" stroke="#242424" stroke-width="5" stroke-linecap="round"/><path d="M1024,273.5L1030,263.2" stroke="#fff" stroke-width="2.4" stroke-linecap="round"/><text x="1025" y="293.4" text-anchor="middle" class="bt">---</text></g>
</g></svg>
</div>

<!-- widget 2 -->
<div class="w" style="left:19px;top:532px;width:656px;height:140px;">
  <div class="wt">HERMS Graph</div>
  <div class="ws" style="right:96px;">Graph</div>
  <svg class="abs" style="left:566px;top:4px" width="90" height="24" viewBox="0 0 90 24" fill="#a9c8d9">
    <path d="M13,9.2L16.5,5.7L20,9.2M13,15.6L16.5,19.1L20,15.6" fill="none" stroke="#a9c8d9" stroke-width="1.7"/>
    <path d="M36.6,5.9H41.6V7.7H38.4V17.6H48.3V14.4H50.1V19.4H36.6Z"/>
    <path d="M44,5.2H50.8V12H49V8.3L41.4,15.9L40.1,14.6L47.7,7H44Z"/>
    <circle cx="70.3" cy="7.6" r="1.75"/><circle cx="70.3" cy="12.2" r="1.75"/><circle cx="70.3" cy="16.8" r="1.75"/>
  </svg>
  <svg class="abs" style="left:0;top:60px" width="656" height="40" viewBox="0 0 656 40">
    <g stroke="#707070" stroke-width="1" transform="translate(-0.8,0)">
      <path d="M41.5,4V40M102.5,4V40M163.5,4V40M224.5,4V40M285.5,4V40M346.5,4V40M407.5,4V40M468.5,4V40M529.5,4V40"/>
    </g>
    <path d="M32,19.3H587" stroke="#46606c" stroke-width="1.3"/>
    <path d="M32,22.8H587" stroke="#6f6f6f" stroke-width="1.5"/>
    <path d="M544.5,19.6H555.5V40" stroke="#9a9a9a" stroke-width="1.4" fill="none"/>
    <path d="M556,19.2H560.6V40" stroke="#f46ad0" stroke-width="1.5" fill="none"/>
    <path d="M570.6,40V19.6L575.6,36" stroke="#9a9a9a" stroke-width="1.4" fill="none"/>
    <path d="M571,20.5L575.6,19" stroke="#c9663a" stroke-width="1.2" fill="none"/>
    <text x="594.5" y="25.8" font-family="Liberation Sans, sans-serif" font-size="10" fill="#fff">90</text>
    <text x="626.3" y="22.4" font-family="Liberation Sans, sans-serif" font-size="10" fill="#6fc08f">100</text>
  </svg>
</div>

<!-- widget 3 -->
<div class="w" style="left:691px;top:532px;width:368px;height:140px;">
  <div class="wt">HERMS Actions</div>
  <div class="ws" style="right:96px;">Quick Actions</div>
  <svg class="abs" style="left:278px;top:4px" width="90" height="24" viewBox="0 0 90 24" fill="#a9c8d9">
    <path d="M13,9.2L16.5,5.7L20,9.2M13,15.6L16.5,19.1L20,15.6" fill="none" stroke="#a9c8d9" stroke-width="1.7"/>
    <path d="M36.6,5.9H41.6V7.7H38.4V17.6H48.3V14.4H50.1V19.4H36.6Z"/>
    <path d="M44,5.2H50.8V12H49V8.3L41.4,15.9L40.1,14.6L47.7,7H44Z"/>
    <circle cx="70.3" cy="7.6" r="1.75"/><circle cx="70.3" cy="12.2" r="1.75"/><circle cx="70.3" cy="16.8" r="1.75"/>
  </svg>
  <div class="abs" style="left:13px;top:45px;width:301px;height:34px;border:1px dashed #a0a0a0;border-radius:4px;background:#2d2d2d;">
    <div class="abs" style="left:6.5px;top:4.5px;font-size:11.3px;line-height:14px;color:#fff;white-space:nowrap;">Disable all setpoints</div>
    <div class="abs" style="left:6.5px;top:19.5px;font-size:10px;line-height:12px;color:#8a8a8a;white-space:nowrap;letter-spacing:0.1px;">3 blocks changed</div>
  </div>
  <svg class="abs" style="left:328px;top:51px" width="22" height="22" viewBox="0 0 22 22"><circle cx="10.4" cy="10.4" r="8.3" fill="#fff"/><path d="M8.3,6.9L13.8,10.4L8.3,13.9Z" fill="#1d1d1d"/></svg>
  <div class="abs" style="left:13px;top:87.5px;width:303px;height:36px;border-radius:4px;background:#2d2d2d;">
    <div class="abs" style="left:6.3px;top:4.2px;font-size:11.3px;line-height:14px;color:#fff;white-space:nowrap;">Constant HLT Temp</div>
  </div>
  <svg class="abs" style="left:328px;top:94px" width="22" height="22" viewBox="0 0 22 22"><circle cx="10.4" cy="10.4" r="8.3" fill="#fff"/><path d="M8.3,6.9L13.8,10.4L8.3,13.9Z" fill="#1d1d1d"/></svg>
</div>

<div class="ftr">
  <svg class="abs" style="left:1170.85px;top:4.8px" width="17.5" height="17.5" viewBox="0 0 24 24"><path d="M12,22A2,2 0 0,0 14,20H10A2,2 0 0,0 12,22M18,16V11C18,7.9 16.4,5.4 13.5,4.7V4A1.5,1.5 0 0,0 12,2.5A1.5,1.5 0 0,0 10.5,4V4.7C7.6,5.4 6,7.9 6,11V16L4,18V19H20V18Z" fill="#fff"/></svg>
</div>
</body>
</html>
